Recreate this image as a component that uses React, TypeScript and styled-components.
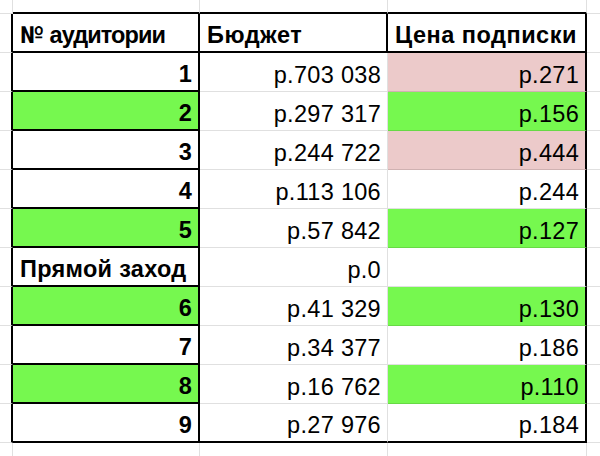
import React from "react";
import styled, { createGlobalStyle, css } from "styled-components";

const Global = createGlobalStyle`
  html, body { margin: 0; padding: 0; background: #fff; }
  body { font-family: "Liberation Sans", Arial, sans-serif; }
`;

type Edge = "none" | "grid" | "ink";
type Fill = "none" | "green" | "pink";

const fills: Record<Fill, string> = {
  none: "#ffffff",
  green: "#76f84f",
  pink: "#eccaca",
};

const edge = (e: Edge) =>
  e === "ink" ? "2px solid #000" : e === "grid" ? "1px solid rgba(0,0,0,0.12)" : "0 solid transparent";

const Sheet = styled.div`
  display: grid;
  grid-template-columns: 13px 187px 188px 199px 1fr;
  grid-template-rows: 14px repeat(11, 39px) 1fr;
  width: 600px;
  height: 456px;
  overflow: hidden;
`;

const Blank = styled.div<{ $r: Edge; $b: Edge }>`
  box-sizing: border-box;
  min-width: 0;
  border-right: ${(p) => edge(p.$r)};
  border-bottom: ${(p) => edge(p.$b)};
  background: #fff;
`;

const Cell = styled.div<{
  $r: Edge;
  $b: Edge;
  $fill?: Fill;
  $bold?: boolean;
  $track?: number;
  $align?: "left" | "right";
}>`
  box-sizing: border-box;
  min-width: 0;
  display: flex;
  align-items: flex-end;
  justify-content: ${(p) => (p.$align === "left" ? "flex-start" : "flex-end")};
  padding: 0 6px 3px 7px;
  border-right: ${(p) => edge(p.$r)};
  border-bottom: ${(p) => edge(p.$b)};
  background: ${(p) => fills[p.$fill ?? "none"]};
  font-size: 23.5px;
  line-height: 26px;
  letter-spacing: ${(p) => p.$track ?? 0.3}px;
  color: #000;
  white-space: nowrap;
  overflow: hidden;
  ${(p) =>
    p.$bold &&
    css`
      font-weight: 700;
    `}
`;

const Text = styled.span`
  white-space: pre;
`;

const Numero = styled.span`
  font-family: Roboto, "Liberation Sans", sans-serif;
  font-weight: 700;
  letter-spacing: 0;
`;

type Row = {
  n: string;
  budget: string;
  price: string;
  nFill?: Fill;
  pFill?: Fill;
  label?: boolean;
};

const rows: Row[] = [
  { n: "1", budget: "р.703 038", price: "р.271", pFill: "pink" },
  { n: "2", budget: "р.297 317", price: "р.156", nFill: "green", pFill: "green" },
  { n: "3", budget: "р.244 722", price: "р.444", pFill: "pink" },
  { n: "4", budget: "р.113 106", price: "р.244" },
  { n: "5", budget: "р.57 842", price: "р.127", nFill: "green", pFill: "green" },
  { n: "Прямой заход", budget: "р.0", price: "", label: true },
  { n: "6", budget: "р.41 329", price: "р.130", nFill: "green", pFill: "green" },
  { n: "7", budget: "р.34 377", price: "р.186" },
  { n: "8", budget: "р.16 762", price: "р.110", nFill: "green", pFill: "green" },
  { n: "9", budget: "р.27 976", price: "р.184" },
];

export default function App() {
  return (
    <>
      <Global />
      <Sheet>
        {/* row above the table */}
        <Blank $r="grid" $b="grid" />
        <Blank $r="grid" $b="ink" />
        <Blank $r="grid" $b="ink" />
        <Blank $r="grid" $b="ink" />
        <Blank $r="none" $b="grid" />

        {/* header */}
        <Blank $r="ink" $b="grid" />
        <Cell $r="ink" $b="ink" $bold $track={-0.9} $align="left">
          <Text>
            <Numero>№</Numero> аудитории
          </Text>
        </Cell>
        <Cell $r="ink" $b="ink" $bold $track={0.5} $align="left">
          <Text>Бюджет</Text>
        </Cell>
        <Cell $r="ink" $b="ink" $bold $track={0.5} $align="left">
          <Text>Цена подписки</Text>
        </Cell>
        <Blank $r="none" $b="grid" />

        {rows.map((row, i) => {
          const last = i === rows.length - 1;
          return (
            <React.Fragment key={i}>
              <Blank $r="ink" $b="grid" />
              <Cell
                $r="ink"
                $b="ink"
                $bold
                $fill={row.nFill}
                $align={row.label ? "left" : "right"}
              >
                <Text>{row.n}</Text>
              </Cell>
              <Cell $r="grid" $b={last ? "ink" : "grid"}>
                <Text>{row.budget}</Text>
              </Cell>
              <Cell $r="ink" $b={last ? "ink" : "grid"} $fill={row.pFill}>
                <Text>{row.price}</Text>
              </Cell>
              <Blank $r="none" $b="grid" />
            </React.Fragment>
          );
        })}

        {/* trailing row */}
        <Blank $r="grid" $b="none" />
        <Blank $r="grid" $b="none" />
        <Blank $r="grid" $b="none" />
        <Blank $r="grid" $b="none" />
        <Blank $r="none" $b="none" />
      </Sheet>
    </>
  );
}
